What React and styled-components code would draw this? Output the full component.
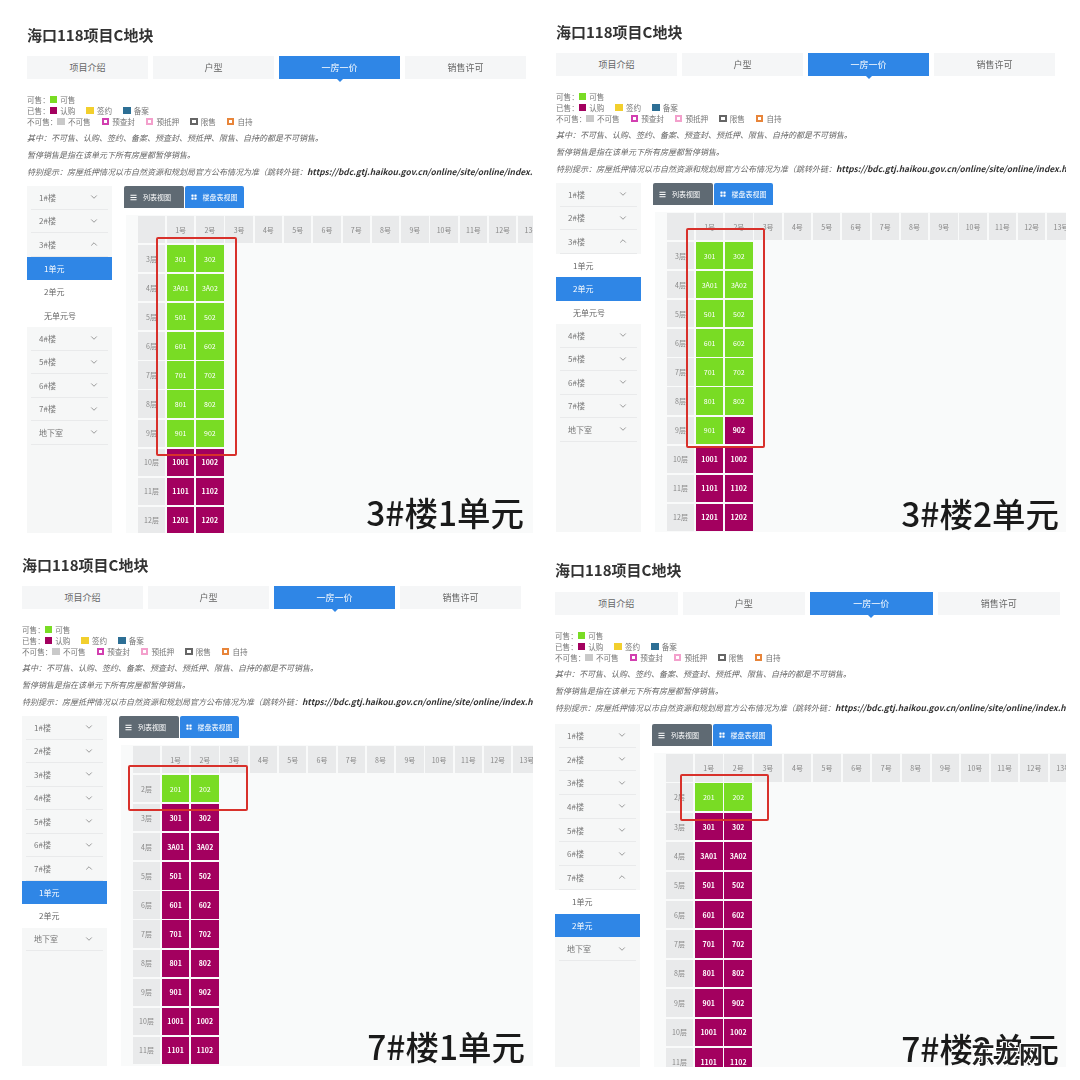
// four screenshots of the 一房一价 page, as a collage
import React from 'react';
import styled, { createGlobalStyle } from 'styled-components';
import { ChevronDown, ChevronUp } from 'lucide-react';
import { FaBars } from 'react-icons/fa';
import { BsGridFill } from 'react-icons/bs';

const FONT = '"Noto Sans CJK SC", "Noto Sans", sans-serif';

const GlobalStyle = createGlobalStyle`
  html, body {
    margin: 0;
    padding: 0;
    background: #fff;
    font-family: ${FONT};
  }
`;

const Page = styled.div`
  width: 1080px;
  height: 1080px;
  display: grid;
  grid-template-columns: 540px 540px;
  grid-template-rows: 540px 540px;
  overflow: hidden;
`;
const Cell = styled.div`
  position: relative;
  padding: ${p => p.$top}px 0 0 ${p => p.$left}px;
`;
const Panel = styled.div`
  width: ${p => p.$width}px;
  height: ${p => p.$height}px;
  overflow: hidden;
  display: flex;
  flex-direction: column;
  filter: blur(0.35px);
  color: #666;
`;
const Title = styled.h1`
  margin: 0;
  font-size: 15px;
  line-height: 20px;
  font-weight: 700;
  color: #333;
`;
const Tabs = styled.div`
  margin-top: ${p => p.$gap}px;
  width: ${p => p.$width}px;
  display: grid;
  grid-template-columns: repeat(4, 1fr);
  gap: 5px;
`;
const Tab = styled.div`
  position: relative;
  height: 23px;
  line-height: 23px;
  text-align: center;
  font-size: 9px;
  background: ${p => (p.$active ? '#2f86e6' : '#f5f6f7')};
  color: ${p => (p.$active ? '#fff' : '#666')};
  &::after {
    content: '';
    display: ${p => (p.$active ? 'block' : 'none')};
    position: absolute;
    left: 50%;
    bottom: -3px;
    margin-left: -3px;
    border-left: 3px solid transparent;
    border-right: 3px solid transparent;
    border-top: 3px solid #2f86e6;
  }
`;
const Legend = styled.div`
  margin-top: 15px;
  font-size: 7.6px;
  line-height: 11px;
  color: #777;
`;
const LegendRow = styled.div`
  display: flex;
  align-items: center;
  height: 11px;
  white-space: nowrap;
`;
const LegendItem = styled.span`
  display: flex;
  align-items: center;
  gap: 3px;
  margin-right: 11px;
`;
const Swatch = styled.i`
  display: block;
  width: 7.5px;
  height: 7.5px;
  box-sizing: border-box;
  background: ${p => (p.$hollow ? '#fff' : p.$color)};
  border: ${p => (p.$hollow ? `2px solid ${p.$color}` : 'none')};
`;
const Notes = styled.div`
  margin-top: 2px;
  font-size: 8px;
  line-height: 17px;
  font-style: italic;
  color: #666;
  white-space: nowrap;
  b {
    color: #333;
    font-weight: 700;
    font-size: 8.4px;
  }
`;
const Body = styled.div`
  margin-top: ${p => p.$gap}px;
  flex: 1;
  min-height: 0;
  display: flex;
  gap: 12px;
`;
const Sidebar = styled.div`
  width: 85px;
  flex: none;
  background: #f6f7f7;
`;
const Floor = styled.div`
  height: ${p => p.$height}px;
  box-sizing: border-box;
  margin: 0 4px;
  padding: 0 9px 0 8px;
  display: flex;
  align-items: center;
  justify-content: space-between;
  font-size: 8px;
  color: #777;
  border-bottom: 1px solid #e9eaeb;
  svg {
    color: #888;
  }
`;
const Unit = styled.div`
  height: ${p => p.$height}px;
  line-height: ${p => p.$height}px;
  padding-left: 17px;
  font-size: 8px;
  background: ${p => (p.$active ? '#2f86e6' : '#fff')};
  color: ${p => (p.$active ? '#fff' : '#666')};
`;
const Main = styled.div`
  flex: 1;
  min-width: 0;
  display: flex;
  flex-direction: column;
`;
const Views = styled.div`
  display: flex;
  gap: 1px;
`;
const ViewButton = styled.div`
  width: 59.5px;
  height: 22px;
  border-radius: 2px 2px 0 0;
  display: flex;
  align-items: center;
  gap: 6px;
  padding-left: 6px;
  box-sizing: border-box;
  font-size: 7px;
  color: #fff;
  background: ${p => (p.$active ? '#2f86e6' : '#5f6a73')};
`;
const TableWrap = styled.div`
  flex: 1;
  margin: 7px 0 0 2px;
  padding: 1px 0 0 12px;
  background: #f9fafa;
  overflow: hidden;
`;
const Table = styled.div`
  display: grid;
  grid-template-columns: 27px repeat(13, ${p => p.$cell}px);
  grid-auto-rows: ${p => p.$row}px;
  gap: 1.9px;
`;
const Head = styled.div`
  background: #e9eaeb;
  color: #888;
  font-size: 7px;
  text-align: center;
  padding-top: 9px;
  box-sizing: border-box;
`;
const Label = styled.div`
  grid-column: 1;
  background: #e9eaeb;
  color: #888;
  font-size: 7px;
  display: flex;
  align-items: center;
  justify-content: center;
`;
const Room = styled.div`
  display: flex;
  align-items: center;
  justify-content: center;
  font-size: 7px;
  color: #fff;
  font-weight: ${p => (p.$sold ? 700 : 400)};
  background: ${p => (p.$sold ? '#a3005f' : '#79dc24')};
`;
const RedBox = styled.div`
  position: absolute;
  left: ${p => p.$x}px;
  top: ${p => p.$y}px;
  width: ${p => p.$w}px;
  height: ${p => p.$h}px;
  box-sizing: border-box;
  border: 2px solid #d8312b;
  border-radius: 2px;
`;
const Caption = styled.div`
  position: absolute;
  right: ${p => p.$right}px;
  top: ${p => p.$top}px;
  font-size: 33.5px;
  line-height: 40px;
  font-weight: 500;
  color: #1a1a1a;
  white-space: nowrap;
`;
const Watermark = styled.div`
  position: absolute;
  right: 37px;
  bottom: 13px;
  font-size: 24px;
  line-height: 28px;
  font-weight: 700;
  color: #222;
  white-space: nowrap;
  text-shadow: 1px 0 0 #fff, -1px 0 0 #fff, 0 1px 0 #fff, 0 -1px 0 #fff,
    1px 1px 0 #fff, -1px -1px 0 #fff, 1px -1px 0 #fff, -1px 1px 0 #fff;
`;

const TABS = ['项目介绍', '户型', '一房一价', '销售许可'];
const FLOORS = ['1#楼', '2#楼', '3#楼', '4#楼', '5#楼', '6#楼', '7#楼', '地下室'];
const STATES = [
    { name: '不可售', color: '#c9c9c9' },
    { name: '预查封', color: '#d23fb0', hollow: true },
    { name: '预抵押', color: '#f3a0cc', hollow: true },
    { name: '限售', color: '#666', hollow: true },
    { name: '自持', color: '#e8853a', hollow: true },
];
const COLS = Array.from({ length: 13 }, (_, i) => `${i + 1}号`);

const roomsFor = (floor) => {
    const prefix = floor === 4 ? '3A' : floor;
    return [`${prefix}01`, `${prefix}02`];
};

function Shot({ shot }) {
    const floors = [];
    for (let f = shot.firstFloor; f <= shot.firstFloor + 10; f++) floors.push(f);

    return (
        <Cell $top={shot.top} $left={shot.left}>
            <Panel $width={shot.width} $height={shot.height}>
                <Title>海口118项目C地块</Title>
                <Tabs $gap={shot.tabGap} $width={shot.tabWidth}>
                    {TABS.map((t, i) => <Tab key={t} $active={i === 2}>{t}</Tab>)}
                </Tabs>
                <Legend>
                    <LegendRow>
                        <span>可售：</span>
                        <LegendItem><Swatch $color="#79dc24" />可售</LegendItem>
                    </LegendRow>
                    <LegendRow>
                        <span>已售：</span>
                        <LegendItem><Swatch $color="#a3005f" />认购</LegendItem>
                        <LegendItem><Swatch $color="#f2cf2d" />签约</LegendItem>
                        <LegendItem><Swatch $color="#2d6f95" />备案</LegendItem>
                    </LegendRow>
                    <LegendRow>
                        <span>不可售：</span>
                        {STATES.map(s => (
                            <LegendItem key={s.name}>
                                <Swatch $color={s.color} $hollow={s.hollow} />{s.name}
                            </LegendItem>
                        ))}
                    </LegendRow>
                </Legend>
                <Notes>
                    <div>其中：不可售、认购、签约、备案、预查封、预抵押、限售、自持的都是不可销售。</div>
                    <div>暂停销售是指在该单元下所有房屋都暂停销售。</div>
                    <div>特别提示：房屋抵押情况以市自然资源和规划局官方公布情况为准（跳转外链：<b>https://bdc.gtj.haikou.gov.cn/online/site/online/index.html</b></div>
                </Notes>
                <Body $gap={shot.bodyGap}>
                    <Sidebar>
                        {FLOORS.map(f => (
                            <React.Fragment key={f}>
                                <Floor $height={shot.item}>
                                    {f}
                                    {f === shot.openFloor ? <ChevronUp size={10} /> : <ChevronDown size={10} />}
                                </Floor>
                                {f === shot.openFloor && shot.units.map((u, i) => (
                                    <Unit key={u} $height={shot.item} $active={i === shot.activeUnit}>{u}</Unit>
                                ))}
                            </React.Fragment>
                        ))}
                    </Sidebar>
                    <Main>
                        <Views>
                            <ViewButton><FaBars size={7} />列表视图</ViewButton>
                            <ViewButton $active><BsGridFill size={6} />楼盘表视图</ViewButton>
                        </Views>
                        <TableWrap>
                            <Table $cell={shot.cell} $row={shot.row}>
                                <Head />
                                {COLS.map(c => <Head key={c}>{c}</Head>)}
                                {floors.map(f => {
                                    const rooms = roomsFor(f);
                                    return (
                                        <React.Fragment key={f}>
                                            <Label>{f}层</Label>
                                            {rooms.map(r => <Room key={r} $sold={!shot.isGreen(f, r)}>{r}</Room>)}
                                        </React.Fragment>
                                    );
                                })}
                            </Table>
                        </TableWrap>
                    </Main>
                </Body>
            </Panel>
            <RedBox $x={shot.box[0]} $y={shot.box[1]} $w={shot.box[2]} $h={shot.box[3]} />
            <Caption $right={shot.capRight} $top={shot.capTop}>{shot.caption}</Caption>
            {shot.watermark && <Watermark>{shot.watermark}</Watermark>}
        </Cell>
    );
}

const SHOTS = [
    {
        top: 25, left: 27, width: 506, height: 508, tabGap: 11, tabWidth: 499, bodyGap: 6,
        item: 23.5, cell: 27.4, row: 27.2,
        firstFloor: 3, openFloor: '3#楼', units: ['1单元', '2单元', '无单元号'], activeUnit: 0,
        isGreen: f => f <= 9,
        box: [156, 237, 81, 219], caption: '3#楼1单元', capRight: 16, capTop: 492,
    },
    {
        top: 22, left: 16, width: 510, height: 510, tabGap: 11, tabWidth: 499, bodyGap: 6,
        item: 23.5, cell: 27.4, row: 27.2,
        firstFloor: 3, openFloor: '3#楼', units: ['1单元', '2单元', '无单元号'], activeUnit: 1,
        isGreen: (f, r) => f <= 9 && r !== '902',
        box: [146, 228, 79, 220], caption: '3#楼2单元', capRight: 21, capTop: 493,
    },
    {
        top: 15, left: 22, width: 511, height: 511, tabGap: 11, tabWidth: 499, bodyGap: 6,
        item: 23.5, cell: 27.4, row: 27.2,
        firstFloor: 2, openFloor: '7#楼', units: ['1单元', '2单元'], activeUnit: 0,
        isGreen: f => f === 2,
        box: [128, 225, 120, 46], caption: '7#楼1单元', capRight: 15, capTop: 486,
    },
    {
        top: 20, left: 15, width: 511, height: 507, tabGap: 12, tabWidth: 505, bodyGap: 8,
        item: 23.7, cell: 27.7, row: 27.5,
        firstFloor: 2, openFloor: '7#楼', units: ['1单元', '2单元'], activeUnit: 1,
        isGreen: f => f === 2,
        box: [140, 234, 89, 47], caption: '7#楼2单元', capRight: 21, capTop: 488, watermark: '东龙网',
    },
];

export default function App() {
    return (
        <Page>
            <GlobalStyle />
            {SHOTS.map(s => <Shot key={s.caption} shot={s} />)}
        </Page>
    );
}
